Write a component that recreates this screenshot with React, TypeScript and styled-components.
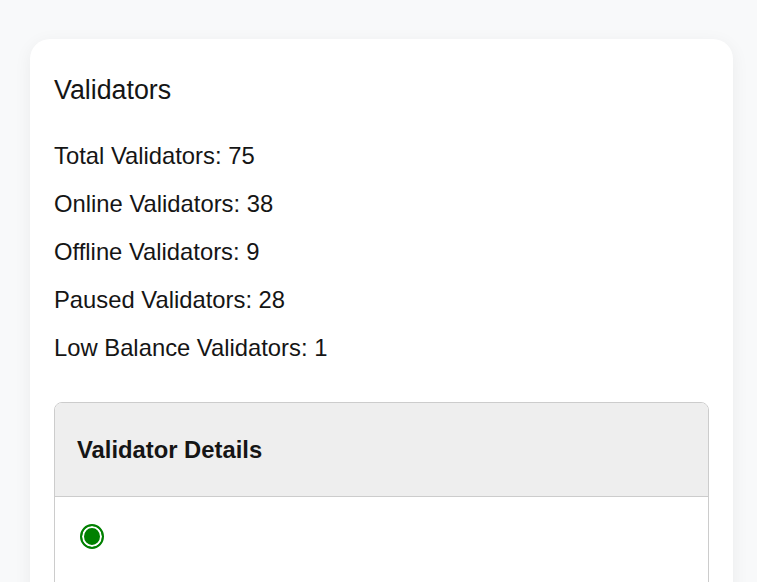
import React from "react";
import styled, { createGlobalStyle } from "styled-components";

const Global = createGlobalStyle`
  html, body { margin: 0; padding: 0; background: #f8f9fa; }
  body { font-family: "Liberation Sans", Arial, sans-serif; color: #151515; }
`;

const Page = styled.div`
  padding: 39px 24px 40px 30px;
`;

const Card = styled.section`
  background: #fff;
  border-radius: 20px;
  box-shadow: 0 4px 18px rgba(0, 0, 0, 0.06);
  padding: 24px 24px 40px 24px;
`;

const Title = styled.h2`
  margin: 12px 0 0;
  font-size: 26.8px;
  font-weight: 400;
  line-height: 30px;
`;

const Stats = styled.div`
  margin-top: 37px;
  display: flex;
  flex-direction: column;
  gap: 20px;
`;

const Stat = styled.p`
  margin: 0;
  font-size: 23.8px;
  line-height: 28px;
`;

const Details = styled.div`
  margin-top: 40px;
  border: 1px solid #cccccc;
  border-radius: 8px;
  overflow: hidden;
`;

const DetailsHeader = styled.div`
  background: #eeeeee;
  padding: 33px 22px 32px;
  border-bottom: 1px solid #cccccc;
`;

const DetailsTitle = styled.h3`
  margin: 0;
  font-size: 23.8px;
  font-weight: 700;
  line-height: 28px;
`;

const DetailsBody = styled.div`
  padding: 27px 25px 40px;
`;

const StatusDot = styled.span<{ $color: string }>`
  display: block;
  width: 20px;
  height: 21px;
  border-radius: 50%;
  border: 2px solid ${(p) => p.$color};
  background: ${(p) => p.$color};
  box-shadow: inset 0 0 0 2px #fff;
`;

const stats = [
  ["Total Validators", 75],
  ["Online Validators", 38],
  ["Offline Validators", 9],
  ["Paused Validators", 28],
  ["Low Balance Validators", 1],
] as const;

export default function App() {
  return (
    <>
      <Global />
      <Page>
        <Card>
          <Title>Validators</Title>
          <Stats>
            {stats.map(([label, value]) => (
              <Stat key={label}>
                {label}: {value}
              </Stat>
            ))}
          </Stats>
          <Details>
            <DetailsHeader>
              <DetailsTitle>Validator Details</DetailsTitle>
            </DetailsHeader>
            <DetailsBody>
              <StatusDot $color="#008000" />
            </DetailsBody>
          </Details>
        </Card>
      </Page>
    </>
  );
}
